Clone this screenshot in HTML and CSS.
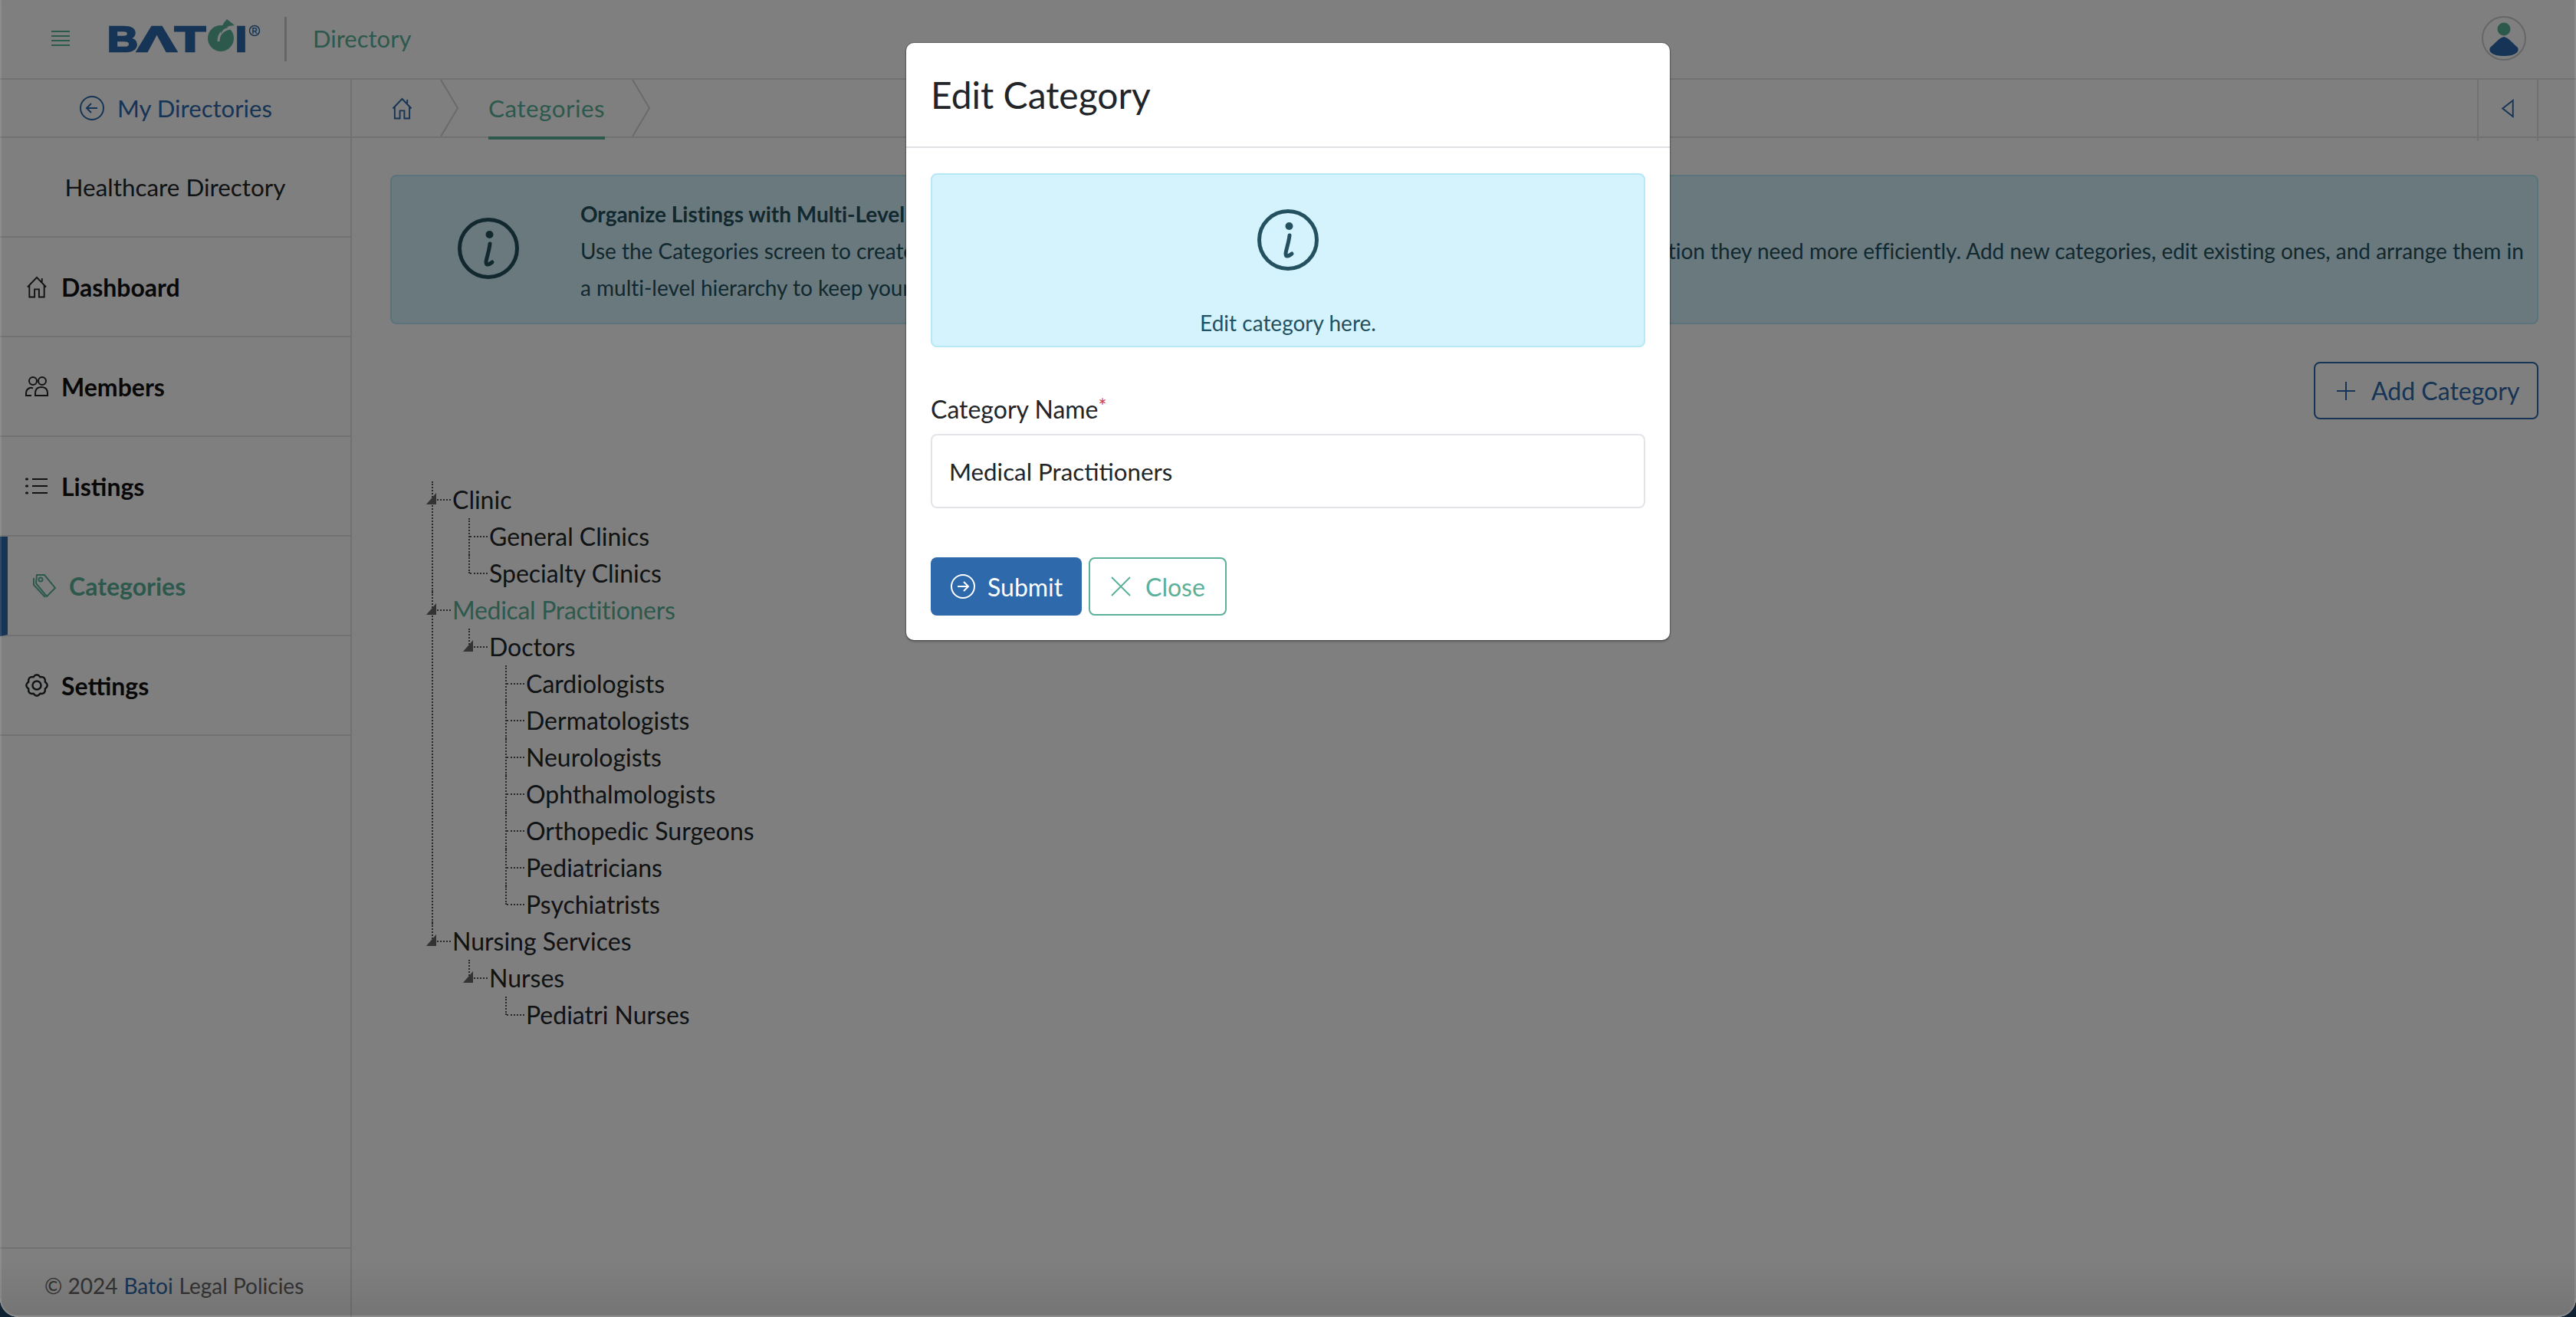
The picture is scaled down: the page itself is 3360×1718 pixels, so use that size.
FILE: index.html
```html
<!DOCTYPE html>
<html lang="en">
<head>
<meta charset="utf-8">
<title>Edit Category</title>
<link rel="stylesheet" href="styles.css">
</head>
<body>
<div class="app">
  <header class="topbar">
    <button class="burger" aria-label="Menu"><i></i><i></i><i></i><i></i></button>
    <svg class="logo" viewBox="0 0 197 46" width="197" height="46" aria-label="Batoi">
      <text class="logo-t" x="-3" y="42" textLength="40" lengthAdjust="spacingAndGlyphs">B</text>
      <text class="logo-t" x="36" y="42" textLength="51" lengthAdjust="spacingAndGlyphs">Λ</text>
      <text class="logo-t" x="85" y="42" textLength="40" lengthAdjust="spacingAndGlyphs">T</text>
      <circle class="logo-o" cx="145" cy="25" r="17"/>
      <path class="logo-cut" d="M157 12 C147 14 142 20 142 29"/>
      <path class="logo-o" d="M153 0 L163 8 L156 9 C150 11 147 15 145 19 C145 11 148 5 153 0Z"/>
      <text class="logo-t" x="164" y="42" textLength="15" lengthAdjust="spacingAndGlyphs">I</text>
      <circle class="logo-r" cx="189" cy="15" r="6.500"/>
      <text class="logo-rt" x="189" y="18.500">R</text>
    </svg>
    <span class="divider"></span>
    <span class="product">Directory</span>
    <span class="avatar">
      <svg viewBox="0 0 58 58" width="58" height="58">
        <circle class="av-ring" cx="29" cy="29" r="28"/>
        <ellipse class="av-head" cx="29" cy="17" rx="8.500" ry="8.500"/>
        <path class="av-body" d="M29 27 C35 28 40 35 47 41 C50 47 43 52 29 52 C15 52 8 47 11 41 C18 35 23 28 29 27Z"/>
      </svg>
    </span>
  </header>

  <nav class="subbar">
    <a class="back">
      <svg class="ico" viewBox="0 0 32 32" width="32" height="32"><circle cx="16" cy="16" r="15"/><path d="M23 16H9.500M15 10l-6 6 6 6"/></svg>
      <span>My Directories</span>
    </a>
    <div class="crumbs">
      <a class="crumb-home">
        <svg class="ico" viewBox="0 0 28 30" width="27" height="29"><path d="M1.500 15L14 2l12.500 13M4 12.500V28.500h7V18h6v10.500h7V12.500M21 3v5"/></svg>
      </a>
      <svg class="chev" viewBox="0 0 24 76" width="24" height="76" preserveAspectRatio="none"><path d="M1 0l22 38L1 76"/></svg>
      <a class="crumb-cur">Categories</a>
      <svg class="chev" viewBox="0 0 24 76" width="24" height="76" preserveAspectRatio="none"><path d="M1 0l22 38L1 76"/></svg>
    </div>
    <button class="collapse" aria-label="Collapse">
      <svg class="ico" viewBox="0 0 18 26" width="18" height="25"><path d="M16 2L2 13l14 11z"/></svg>
    </button>
  </nav>

  <div class="body">
    <aside class="side">
      <div class="side-title">Healthcare Directory</div>
      <a class="side-item">
        <svg class="sico" viewBox="0 0 28 30" width="27" height="29"><path d="M1.500 15L14 2l12.500 13M4 12.500V28.500h7V18h6v10.500h7V12.500M21 3v5"/></svg>
        <span>Dashboard</span>
      </a>
      <a class="side-item">
        <svg class="sico" viewBox="0 0 32 26" width="32" height="26"><circle cx="11" cy="6" r="5"/><circle cx="23" cy="6" r="5"/><path d="M14 25h16v-3c0-5-3-8-8-8s-8 3-8 8zM9 25H2v-3c0-4 2-6 5-7 1.500-.300 3 0 4 .500"/></svg>
        <span>Members</span>
      </a>
      <a class="side-item">
        <svg class="sico" viewBox="0 0 30 24" width="30" height="24"><path d="M9 3h20M9 12h20M9 21h20"/><path class="sdot" d="M1.500 3h1M1.500 12h1M1.500 21h1"/></svg>
        <span>Listings</span>
      </a>
      <a class="side-item is-active">
        <svg class="sico" viewBox="0 0 32 32" width="32" height="32"><path d="M6 2h10l14 17-11 11L5 13z"/><circle cx="11" cy="8" r="2.500"/><path d="M2 6v9l15 16"/></svg>
        <span>Categories</span>
      </a>
      <a class="side-item">
        <svg class="sico" viewBox="0 0 26 26" width="32" height="32"><path d="M21.800 9.400Q26.500 13 21.800 16.600Q22.500 22.500 16.600 21.800Q13 26.500 9.400 21.800Q3.500 22.500 4.200 16.600Q-.5 13 4.200 9.400Q3.500 3.500 9.400 4.200Q13 -.5 16.600 4.200Q22.500 3.500 21.800 9.400Z"/><circle cx="13" cy="13" r="4.500"/></svg>
        <span>Settings</span>
      </a>
      <footer class="side-foot">© 2024 <a class="foot-link">Batoi</a> Legal Policies</footer>
    </aside>

    <main class="main">
      <section class="alert alert-page">
        <svg class="info" viewBox="0 0 80 80" width="80" height="80"><circle cx="40" cy="40" r="37.500"/><circle class="info-dot" cx="41.500" cy="22" r="5"/><path class="info-i" d="M42 34C41 44 37 54 37 58C37 62 40 62 45 58"/></svg>
        <div class="alert-text">
          <strong class="alert-title">Organize Listings with Multi-Level Categories</strong>
          <span class="alert-line">Use the Categories screen to create and organize categories for your directory so that visitors can locate the information they need more efficiently. Add new categories, edit existing ones, and arrange them in</span>
          <span class="alert-line">a multi-level hierarchy to keep your directory well organized.</span>
        </div>
      </section>

      <div class="actions">
        <button class="btn-add">
          <svg class="plus" viewBox="0 0 24 24" width="24" height="24"><path d="M12 0v24M0 12h24"/></svg>
          <span>Add Category</span>
        </button>
      </div>

      <ul class="tree">
        <li class="has-kids"><span class="node">Clinic</span>
          <ul>
            <li><span class="node">General Clinics</span></li>
            <li><span class="node">Specialty Clinics</span></li>
          </ul>
        </li>
        <li class="has-kids"><span class="node is-selected">Medical Practitioners</span>
          <ul>
            <li class="has-kids"><span class="node">Doctors</span>
              <ul>
                <li><span class="node">Cardiologists</span></li>
                <li><span class="node">Dermatologists</span></li>
                <li><span class="node">Neurologists</span></li>
                <li><span class="node">Ophthalmologists</span></li>
                <li><span class="node">Orthopedic Surgeons</span></li>
                <li><span class="node">Pediatricians</span></li>
                <li><span class="node">Psychiatrists</span></li>
              </ul>
            </li>
          </ul>
        </li>
        <li class="has-kids"><span class="node">Nursing Services</span>
          <ul>
            <li class="has-kids"><span class="node">Nurses</span>
              <ul>
                <li><span class="node">Pediatri Nurses</span></li>
              </ul>
            </li>
          </ul>
        </li>
      </ul>
    </main>
  </div>

  <div class="backdrop"></div>

  <div class="modal" role="dialog" aria-modal="true">
    <div class="modal-head"><h1 class="modal-title">Edit Category</h1></div>
    <div class="modal-body">
      <div class="alert alert-modal">
        <svg class="info" viewBox="0 0 80 80" width="80" height="80"><circle cx="40" cy="40" r="37.500"/><circle class="info-dot" cx="41.500" cy="22" r="5"/><path class="info-i" d="M42 34C41 44 37 54 37 58C37 62 40 62 45 58"/></svg>
        <p class="alert-note">Edit category here.</p>
      </div>
      <label class="field-label" for="catname">Category Name<sup class="req">*</sup></label>
      <input class="field" id="catname" type="text" value="Medical Practitioners">
      <div class="modal-actions">
        <button class="btn btn-submit">
          <svg class="bico" viewBox="0 0 32 32" width="32" height="32"><circle cx="16" cy="16" r="15"/><path d="M9 16h13.500M17 10l6 6-6 6"/></svg>
          <span>Submit</span>
        </button>
        <button class="btn btn-close">
          <svg class="bico" viewBox="0 0 26 26" width="26" height="26"><path d="M1 1l24 24M25 1L1 25"/></svg>
          <span>Close</span>
        </button>
      </div>
    </div>
  </div>
</div>
</body>
</html>
```
FILE: styles.css
```css
* { box-sizing: border-box; }
html { height: 100%; background: #0e2233; overflow: hidden; }
body {
  margin: 0;
  height: 100%;
  font-family: "Lato", "Liberation Sans", sans-serif;
  font-size: 32px;
  color: #212529;
}
a { color: inherit; text-decoration: none; }
button { font: inherit; background: none; border: 0; padding: 0; color: inherit; }
ul { list-style: none; margin: 0; padding: 0; }

.app {
  position: relative;
  height: 100vh;
  display: flex;
  flex-direction: column;
  background: #fff;
  overflow: hidden;
  border-radius: 0 0 24px 24px;
}

/* top bar */
.topbar {
  height: 102px;
  flex: none;
  display: flex;
  align-items: center;
  padding-left: 67px;
  padding-right: 65px;
}
.burger { width: 24px; display: flex; flex-direction: column; gap: 4px; margin-top: -2px; }
.burger i { display: block; height: 2px; background: #5bb29b; }
.logo { margin-left: 52px; margin-top: -6px; flex: none; overflow: visible; }
.logo-t { font-family: "Liberation Sans", sans-serif; font-weight: 700; font-size: 47px; fill: #2d69ab; stroke: #2d69ab; stroke-width: 2.500; }
.logo-o { fill: #5bb29b; }
.logo-cut { fill: none; stroke: #fff; stroke-width: 3; }
.logo-r { fill: none; stroke: #2d69ab; stroke-width: 1.500; }
.logo-rt { font-family: "Liberation Sans", sans-serif; font-size: 10px; font-weight: 700; fill: #2d69ab; text-anchor: middle; }
.divider { width: 3px; height: 58px; background: #ccc; margin-left: 31px; }
.product { margin-left: 34px; color: #5bb29b; font-size: 31px; margin-top: -2px; }
.avatar { margin-left: auto; width: 58px; height: 58px; margin-top: -3px; }
.av-ring { fill: none; stroke: #ccc; stroke-width: 2; }
.av-head { fill: #5bb29b; }
.av-body { fill: #2d69ab; }

/* sub bar */
.subbar {
  height: 78px;
  flex: none;
  display: flex;
  border-top: 2px solid #dee2e6;
  border-bottom: 2px solid #dee2e6;
}
.back {
  width: 459px;
  flex: none;
  display: flex;
  align-items: center;
  gap: 17px;
  padding-left: 104px;
  color: #2d69ab;
  border-right: 2px solid #dee2e6;
  font-size: 31.100px;
}
.ico { fill: none; stroke: #2d69ab; stroke-width: 2; display: block; }
.crumbs { display: flex; align-items: center; flex: 1; height: 74px; }
.crumb-home { margin-left: 52px; margin-right: 36px; }
.chev { fill: none; stroke: #d4d4d4; stroke-width: 2; flex: none; height: 74px; }
.crumb-cur {
  margin: 0 35px 0 39px;
  height: 78px;
  line-height: 74px;
  color: #5bb29b;
  border-bottom: 4px solid #5bb29b;
  align-self: flex-start;
  font-size: 31.400px;
  letter-spacing: .5px;
}
.collapse {
  width: 80px;
  flex: none;
  margin-right: 49px;
  border-left: 2px solid #dee2e6;
  border-right: 2px solid #dee2e6;
  height: 80px;
  display: flex;
  align-items: center;
  justify-content: center;
  padding-bottom: 6px;
}

/* layout */
.body { flex: 1; display: flex; min-height: 0; }
.side {
  width: 459px;
  flex: none;
  display: flex;
  flex-direction: column;
  border-right: 2px solid #dee2e6;
}
.side-title {
  height: 130px;
  display: flex;
  align-items: center;
  justify-content: center;
  border-bottom: 2px solid #dee2e6;
  font-size: 31.400px;
}
.side-item {
  height: 130px;
  flex: none;
  display: flex;
  align-items: center;
  gap: 16px;
  padding-left: 32px;
  border-bottom: 2px solid #dee2e6;
  font-weight: 700;
  color: #111;
}
.sico { fill: none; stroke: #212529; stroke-width: 2; flex: none; width: 32px; }
.sdot { stroke-width: 3; stroke-linecap: round; }
.is-active {
  border-left: 10px solid #2d69ab;
  color: #5bb29b;
}
.is-active .sico { stroke: #5bb29b; }
.side-foot {
  margin-top: auto;
  height: 91px;
  border-top: 2px solid #dee2e6;
  display: flex;
  align-items: center;
  gap: 8px;
  padding: 6px 0 0 58px;
  font-size: 28px;
  color: #666;
}
.foot-link { color: #2d69ab; }

/* main */
.main { flex: 1; min-width: 0; padding: 48px 49px 0 50px; }
.alert {
  border: 2px solid #b6e8f6;
  border-radius: 8px;
  background: #d4f3fc;
  color: #24515f;
}
.alert-page {
  height: 195px;
  display: flex;
  align-items: flex-start;
  padding-top: 25px;
  padding-left: 86px;
  gap: 80px;
  font-size: 28px;
  line-height: 48px;
}
.alert-page .info { margin-top: 29px; flex: none; }
.alert-text { white-space: nowrap; letter-spacing: -.018px; }
.alert-title { display: block; font-weight: 700; }
.alert-line { display: block; }
.info { fill: none; stroke: #24515f; stroke-width: 5; display: block; }
.info-dot { fill: #24515f; stroke: none; }
.info-i { stroke-width: 5; stroke-linecap: round; }

.actions { display: flex; justify-content: flex-end; margin-top: 49px; }
.btn-add {
  height: 75px;
  width: 293px;
  display: flex;
  align-items: center;
  gap: 21px;
  padding-left: 28px;
  color: #2d69ab;
  border: 2px solid #2d69ab;
  border-radius: 8px;
}
.plus { fill: none; stroke: #2d69ab; stroke-width: 2; }

/* tree */
.tree { margin: 81px 0 0 54px; }
.tree ul { margin-left: 21px; }
.tree li { position: relative; padding-left: 27px; }
.tree li::before {
  content: "";
  position: absolute;
  left: 0;
  top: 0;
  bottom: 0;
  border-left: 2px dotted #555;
}
.tree li:last-child::before { bottom: auto; height: 24px; }
.tree li::after {
  content: "";
  position: absolute;
  left: 2px;
  top: 23px;
  width: 23px;
  border-top: 2px dotted #555;
}
.node { display: block; height: 48px; line-height: 48px; white-space: nowrap; position: relative; }
.tree .has-kids > .node::before {
  content: "";
  position: absolute;
  z-index: 1;
  left: -34px;
  top: 15px;
  width: 13px;
  height: 15px;
  background: #333;
  clip-path: polygon(100% 0, 100% 100%, 0 100%);
}
.is-selected { color: #5bb29b; letter-spacing: -.3px; }

/* modal */
.backdrop {
  position: absolute;
  inset: 0;
  background: linear-gradient(rgba(0, 0, 0, .5) calc(100% - 70px), rgba(0, 0, 0, .54));
  border: solid rgba(255, 255, 255, .1);
  border-width: 0 2px 2px;
  border-radius: 0 0 24px 24px;
}
.modal {
  position: absolute;
  left: 1182px;
  top: 56px;
  width: 996px;
  height: 779px;
  background: #fff;
  border-radius: 10px;
  box-shadow: 0 0 0 1px rgba(0,0,0,.2), 0 2px 3px rgba(0,0,0,.3);
}
.modal-head {
  height: 137px;
  display: flex;
  align-items: center;
  padding: 0 32px;
  border-bottom: 2px solid #dee2e6;
}
.modal-title { margin: 0; font-size: 48px; font-weight: 400; line-height: 1; }
.modal-body { padding: 33px 32px 0; }
.alert-modal {
  height: 227px;
  display: flex;
  flex-direction: column;
  align-items: center;
  padding-top: 45px;
}
.alert-note { margin: 44px 0 0; font-size: 28px; line-height: 48px; }
.field-label { display: block; margin-top: 57px; height: 48px; line-height: 48px; font-size: 32px; }
.req { color: #d23c4b; font-size: 26px; line-height: 0; vertical-align: 6px; }
.field {
  display: block;
  width: 100%;
  height: 97px;
  margin-top: 8px;
  padding: 0 22px;
  font: inherit;
  font-size: 31.300px;
  color: #212529;
  border: 2px solid #e2e4e8;
  border-radius: 8px;
  background: #fff;
  outline: 0;
}
.modal-actions { display: flex; gap: 9px; margin-top: 64px; }
.btn {
  height: 76px;
  display: flex;
  align-items: center;
  border-radius: 8px;
}
.bico { fill: none; stroke-width: 2; flex: none; display: block; }
.btn-submit { width: 197px; padding-left: 26px; gap: 16px; background: #2d69ab; color: #fff; }
.btn-submit .bico { stroke: #fff; }
.btn-close { width: 180px; padding-left: 27px; gap: 19px; color: #5bb09a; border: 2px solid #5bb09a; }
.btn-close .bico { stroke: #5bb09a; }
```
